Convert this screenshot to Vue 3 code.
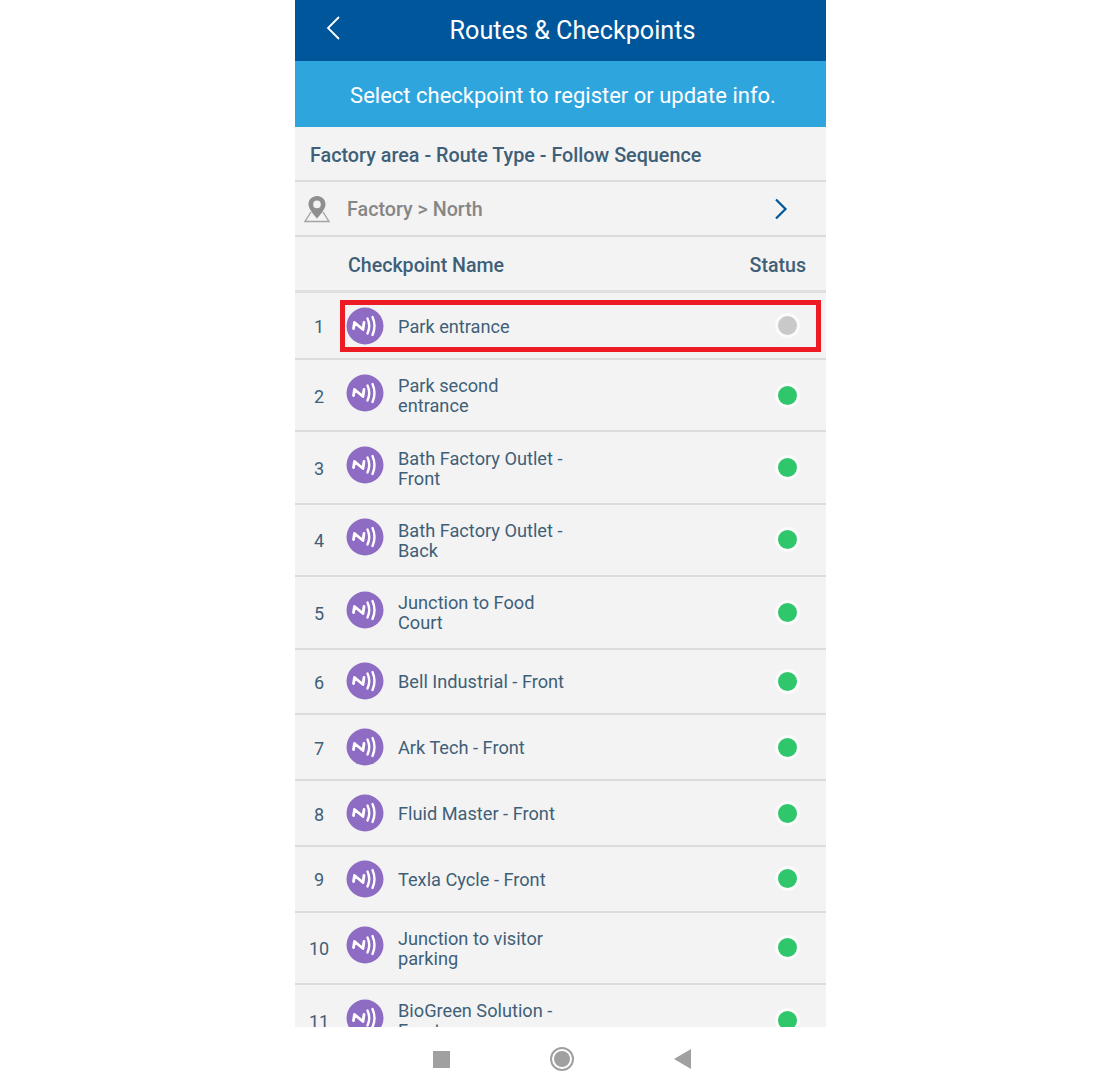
<template>
  <div class="page">
    <div class="phone">
      <header class="topbar">
        <svg class="back" width="16" height="26" viewBox="0 0 16 26">
          <path d="M14 2 L3 13 L14 24" fill="none" stroke="#fff" stroke-width="1.8" />
        </svg>
        <h1>Routes &amp; Checkpoints</h1>
      </header>
      <div class="hint">Select checkpoint to register or update info.</div>

      <div class="content">
        <div class="route-type">Factory area - Route Type - Follow Sequence</div>
        <div class="location">
          <svg class="pin" width="28" height="28" viewBox="0 0 28 28">
            <path d="M8 17 L2 26.500 H26 L20 17" fill="none" stroke="#a3a3a3" stroke-width="1.400" />
            <path fill-rule="evenodd" fill="#8f8f8f" d="M14 1 C9 1 5.500 4.600 5.500 9.300 C5.500 13.800 10 19 14 23.500 C18 19 22.500 13.800 22.500 9.300 C22.500 4.600 19 1 14 1 Z M14 5.600 A3.800 3.800 0 1 1 14 13.200 A3.800 3.800 0 1 1 14 5.600 Z" />
          </svg>
          <span class="loc-name">Factory &gt; North</span>
          <svg class="next" width="14" height="22" viewBox="0 0 14 22">
            <path d="M2 1.500 L11.500 11 L2 20.500" fill="none" stroke="#00569a" stroke-width="2.200" />
          </svg>
        </div>
        <div class="table-head">
          <span>Checkpoint Name</span>
          <span>Status</span>
        </div>

        <div
          v-for="(cp, index) in checkpoints"
          :key="cp.name"
          class="row"
          :class="cp.size"
        >
          <span class="num">{{ index + 1 }}</span>
          <span class="nfc">
            <svg width="38" height="38" viewBox="0 0 38 38">
              <circle cx="19" cy="19" r="18.500" fill="#8e6cc4" />
              <path d="M7.500 21.500 L8.500 15.500 L17 22.500 L18 15.500" fill="none" stroke="#fff" stroke-width="2.800" stroke-linecap="round" stroke-linejoin="round" />
              <path d="M21.500 11.500 Q25 19 21.500 26.500 M26.500 10 Q30.500 19 26.500 28" fill="none" stroke="#fff" stroke-width="2.400" stroke-linecap="round" />
            </svg>
          </span>
          <span class="name">{{ cp.name }}</span>
          <span class="dot" :class="{ pending: cp.pending }"></span>
          <div v-if="cp.pending" class="highlight"></div>
        </div>
      </div>

      <nav class="navbar">
        <span class="nav-square"></span>
        <span class="nav-circle"></span>
        <span class="nav-back"></span>
      </nav>
    </div>
  </div>
</template>

<script setup>
const checkpoints = [
  { name: 'Park entrance', size: 'first', pending: true },
  { name: 'Park second entrance', size: 'tall' },
  { name: 'Bath Factory Outlet - Front', size: 'tall' },
  { name: 'Bath Factory Outlet - Back', size: 'tall' },
  { name: 'Junction to Food Court', size: 'tall' },
  { name: 'Bell Industrial - Front', size: 'short' },
  { name: 'Ark Tech - Front', size: 'short' },
  { name: 'Fluid Master - Front', size: 'short' },
  { name: 'Texla Cycle - Front', size: 'short' },
  { name: 'Junction to visitor parking', size: 'tall' },
  { name: 'BioGreen Solution - Front', size: 'tall' }
]
</script>

<style>
html,
body {
  background: #fff;
}
</style>

<style scoped>
.page {
  height: 1080px;
  padding-left: 295px;
  font-family: Roboto, "Liberation Sans", sans-serif;
}

.phone {
  width: 531px;
  height: 1080px;
  display: flex;
  flex-direction: column;
}

.topbar {
  height: 61px;
  flex: none;
  background: #00569a;
  display: flex;
  align-items: center;
  justify-content: center;
  position: relative;
}

.topbar h1 {
  margin: 0;
  color: #fff;
  font-size: 25.200px;
  font-weight: 400;
  padding-left: 24px;
  line-height: 62px;
}

.back {
  position: absolute;
  left: 30px;
  top: 15px;
}

.hint {
  height: 66px;
  flex: none;
  background: #2fa5de;
  color: #fff;
  font-size: 22px;
  line-height: 69px;
  text-align: center;
  padding-left: 5px;
  box-sizing: border-box;
}

.content {
  height: 900px;
  flex: none;
  overflow: hidden;
  background: #f3f3f3;
  color: #3f5f78;
}

.route-type {
  height: 55px;
  box-sizing: border-box;
  border-bottom: 2px solid #dcdcdc;
  padding-left: 15px;
  font-size: 19.750px;
  font-weight: 500;
  line-height: 57px;
}

.location {
  height: 55px;
  box-sizing: border-box;
  border-bottom: 2px solid #dcdcdc;
  display: flex;
  align-items: center;
  padding: 1px 0 0 8px;
}

.loc-name {
  margin-left: 16px;
  font-size: 19.700px;
  font-weight: 500;
  color: #868686;
}

.next {
  margin-left: auto;
  margin-right: 38px;
}

.table-head {
  height: 56px;
  box-sizing: border-box;
  border-bottom: 3px solid #e0e0e0;
  display: flex;
  justify-content: space-between;
  align-items: center;
  padding: 3px 20px 0 53px;
  font-size: 19.600px;
  font-weight: 500;
}

.row {
  position: relative;
  display: flex;
  align-items: center;
  box-sizing: border-box;
  border-bottom: 2px solid #dcdcdc;
  padding-right: 26px;
}

.row.first {
  height: 67px;
}

.row.tall {
  height: 72.400px;
}

.row.short {
  height: 65.800px;
}

.num {
  width: 48px;
  flex: none;
  text-align: center;
  font-size: 18px;
  padding-top: 2px;
}

.nfc {
  width: 38px;
  height: 38px;
  flex: none;
  margin-left: 3px;
}

.row.tall .nfc {
  margin-top: -5px;
}

.nfc svg {
  display: block;
}

.name {
  margin-left: 14px;
  width: 170px;
  flex: none;
  font-size: 18.200px;
  line-height: 20px;
  padding-top: 2px;
}

.dot {
  margin-left: auto;
  width: 19px;
  height: 19px;
  border-radius: 50%;
  background: #2fc66c;
  border: 3px solid #fbfbfb;
}

.dot.pending {
  background: #c9c9c9;
}

.highlight {
  position: absolute;
  left: 45px;
  top: 7px;
  width: 481px;
  height: 52px;
  box-sizing: border-box;
  border: 5px solid #ed1c24;
}

.navbar {
  flex: 1;
  background: #fff;
  display: flex;
  align-items: center;
  gap: 100px;
  padding: 11px 0 0 138px;
}

.nav-square {
  width: 17px;
  height: 17px;
  background: #a0a0a0;
}

.nav-circle {
  width: 24px;
  height: 24px;
  box-sizing: border-box;
  border-radius: 50%;
  padding: 2px;
  background: #a0a0a0;
  background-clip: content-box;
  border: 2px solid #a0a0a0;
}

.nav-back {
  width: 0;
  height: 0;
  border-top: 10px solid transparent;
  border-bottom: 10px solid transparent;
  border-right: 17px solid #a0a0a0;
}
</style>
